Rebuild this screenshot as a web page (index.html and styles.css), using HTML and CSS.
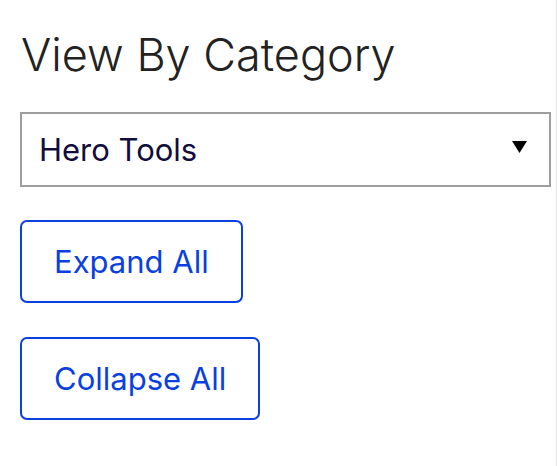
FILE: index.html
```html
<!DOCTYPE html>
<html lang="en">
<head>
<meta charset="utf-8">
<title>View By Category</title>
<link rel="stylesheet" href="styles.css">
</head>
<body>
<div class="panel">
  <h2 class="title">View By Category</h2>
  <div class="select">
    <span class="select-value">Hero Tools</span>
    <svg class="select-arrow" width="15" height="12" viewBox="0 0 15 12" aria-hidden="true"><polygon points="0,0 15,0 7.5,12" fill="#000"/></svg>
  </div>
  <div class="actions">
    <button class="btn" type="button">Expand All</button>
    <button class="btn" type="button">Collapse All</button>
  </div>
</div>
</body>
</html>
```
FILE: styles.css
```css
html, body {
  margin: 0;
  padding: 0;
  background: #fff;
}
body {
  font-family: Inter, "Noto Sans", sans-serif;
  font-optical-sizing: none;
}
.panel {
  box-sizing: border-box;
  width: 557px;
  min-height: 466px;
  border-right: 1px solid #e6e6e6;
  padding: 25px 0 0 20px;
}
.title {
  margin: 0 0 0 1px;
  font-size: 45px;
  font-weight: 300;
  line-height: 60px;
  color: #222;
}
.select {
  box-sizing: border-box;
  width: 531px;
  height: 75px;
  margin-top: 27px;
  border: 2px solid #9e9e9e;
  display: flex;
  align-items: center;
  justify-content: space-between;
  padding: 0 22px 0 17px;
}
.select-value {
  font-size: 31px;
  color: #120d3d;
}
.select-arrow {
  display: block;
  margin-top: -6px;
}
.actions {
  display: flex;
  flex-direction: column;
  align-items: flex-start;
  gap: 34px;
  margin-top: 33px;
}
.btn {
  box-sizing: border-box;
  height: 83px;
  padding: 0 32px;
  border: 2px solid #0a3fe0;
  border-radius: 7px;
  background: #fff;
  color: #0a3fe0;
  font-family: Inter, "Noto Sans", sans-serif;
  font-optical-sizing: none;
  font-size: 31px;
  font-weight: 400;
}
```
